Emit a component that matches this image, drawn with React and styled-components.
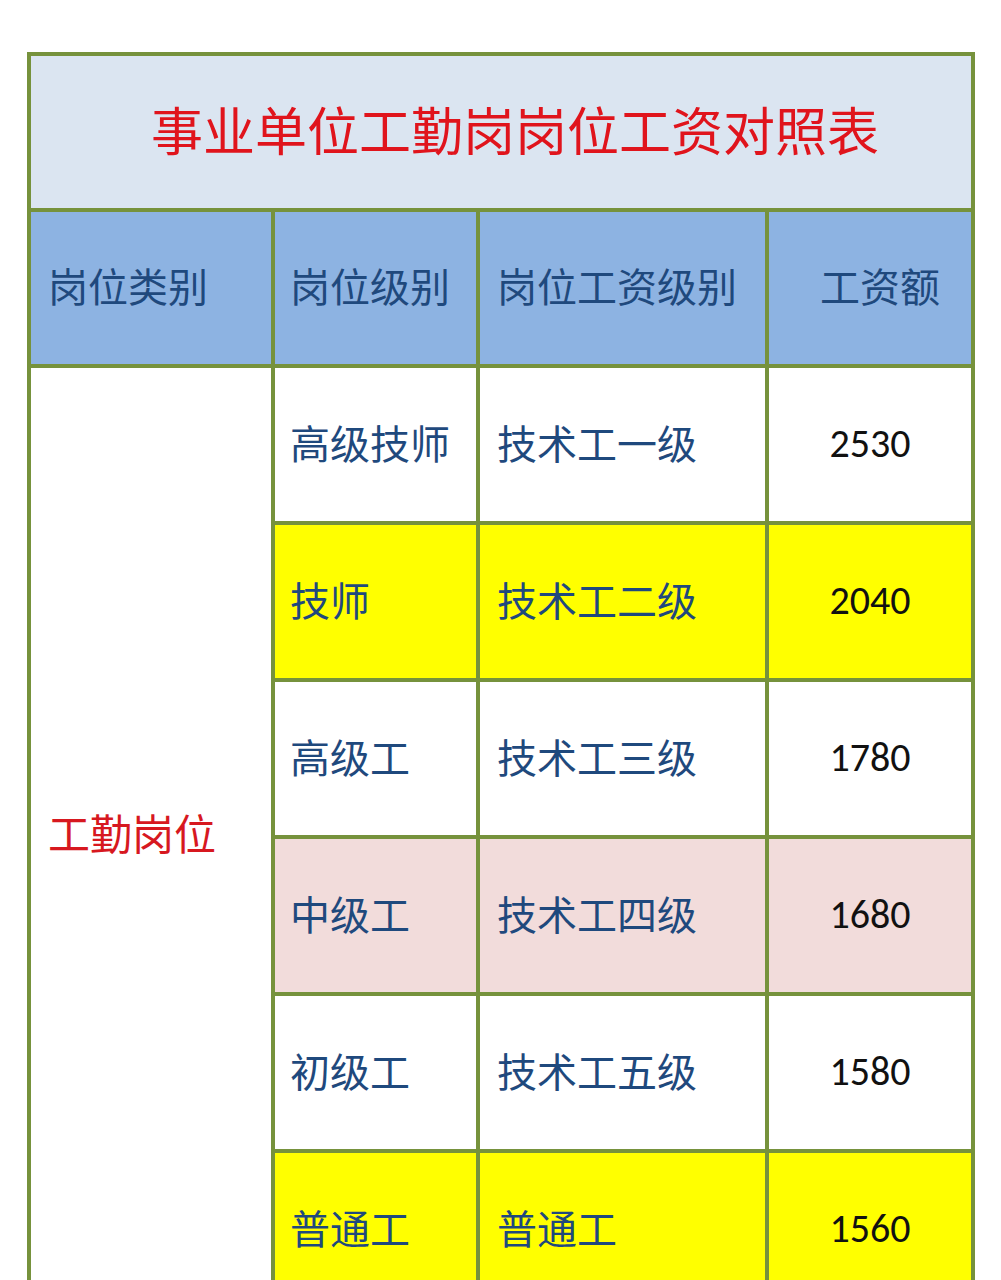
import React from "react";
import styled, { createGlobalStyle } from "styled-components";

const Global = createGlobalStyle`
  html, body { margin: 0; padding: 0; background: #ffffff; }
  body { font-family: "Noto Sans CJK SC", "Noto Sans", sans-serif; }
`;

const Page = styled.div`
  padding: 52px 0 0 27px;
  width: 1001px;
  box-sizing: border-box;
`;

const Table = styled.div`
  display: grid;
  grid-template-columns: 240px 201px 285px 202px;
  grid-template-rows: 152px 152px repeat(6, 153px);
  gap: 4px;
  padding: 4px;
  background: #76923c;
  width: 948px;
  box-sizing: border-box;
`;

const TitleCell = styled.div`
  grid-column: 1 / -1;
  background: #dbe5f1;
  display: flex;
  align-items: center;
  justify-content: center;
  padding-left: 28px;
  padding-bottom: 8px;
  font-family: "Noto Sans CJK SC", sans-serif;
  font-size: 52px;
  color: #e0141c;
`;

const HeadCell = styled.div`
  background: #8db3e2;
  display: flex;
  align-items: center;
  justify-content: ${(p) => (p.$center ? "center" : "flex-start")};
  padding-left: ${(p) => (p.$center ? "20px" : p.$pad || "17px")};
  padding-bottom: 6px;
  font-size: 40px;
  color: #1f497d;
  white-space: nowrap;
`;

const CategoryCell = styled.div`
  grid-row: span 6;
  background: #ffffff;
  display: flex;
  align-items: center;
  padding-left: 17px;
  padding-bottom: 12px;
  font-size: 42px;
  color: #d7181f;
`;

const BodyCell = styled.div`
  background: ${(p) => p.$bg};
  display: flex;
  align-items: center;
  padding-left: ${(p) => p.$pad || "16px"};
  padding-bottom: 6px;
  font-size: 40px;
  color: #1f497d;
  white-space: nowrap;
`;

const AmountCell = styled.div`
  background: ${(p) => p.$bg};
  display: flex;
  align-items: center;
  justify-content: center;
  padding-bottom: 2px;
  font-family: Carlito, Calibri, Roboto, sans-serif;
  font-size: 40px;
  color: #111111;
`;

const BG = {
  white: "#ffffff",
  yellow: "#ffff00",
  pink: "#f2dcdb",
};

const rows = [
  { level: "高级技师", grade: "技术工一级", amount: "2530", bg: BG.white },
  { level: "技师", grade: "技术工二级", amount: "2040", bg: BG.yellow },
  { level: "高级工", grade: "技术工三级", amount: "1780", bg: BG.white },
  { level: "中级工", grade: "技术工四级", amount: "1680", bg: BG.pink },
  { level: "初级工", grade: "技术工五级", amount: "1580", bg: BG.white },
  { level: "普通工", grade: "普通工", amount: "1560", bg: BG.yellow },
];

export default function App() {
  return (
    <>
      <Global />
      <Page>
        <Table>
          <TitleCell>事业单位工勤岗岗位工资对照表</TitleCell>
          <HeadCell>岗位类别</HeadCell>
          <HeadCell $pad="15px">岗位级别</HeadCell>
          <HeadCell>岗位工资级别</HeadCell>
          <HeadCell $center>工资额</HeadCell>
          <CategoryCell>工勤岗位</CategoryCell>
          {rows.map((r) => (
            <React.Fragment key={r.amount}>
              <BodyCell $bg={r.bg} $pad="15px">{r.level}</BodyCell>
              <BodyCell $bg={r.bg} $pad="17px">{r.grade}</BodyCell>
              <AmountCell $bg={r.bg}>{r.amount}</AmountCell>
            </React.Fragment>
          ))}
        </Table>
      </Page>
    </>
  );
}
